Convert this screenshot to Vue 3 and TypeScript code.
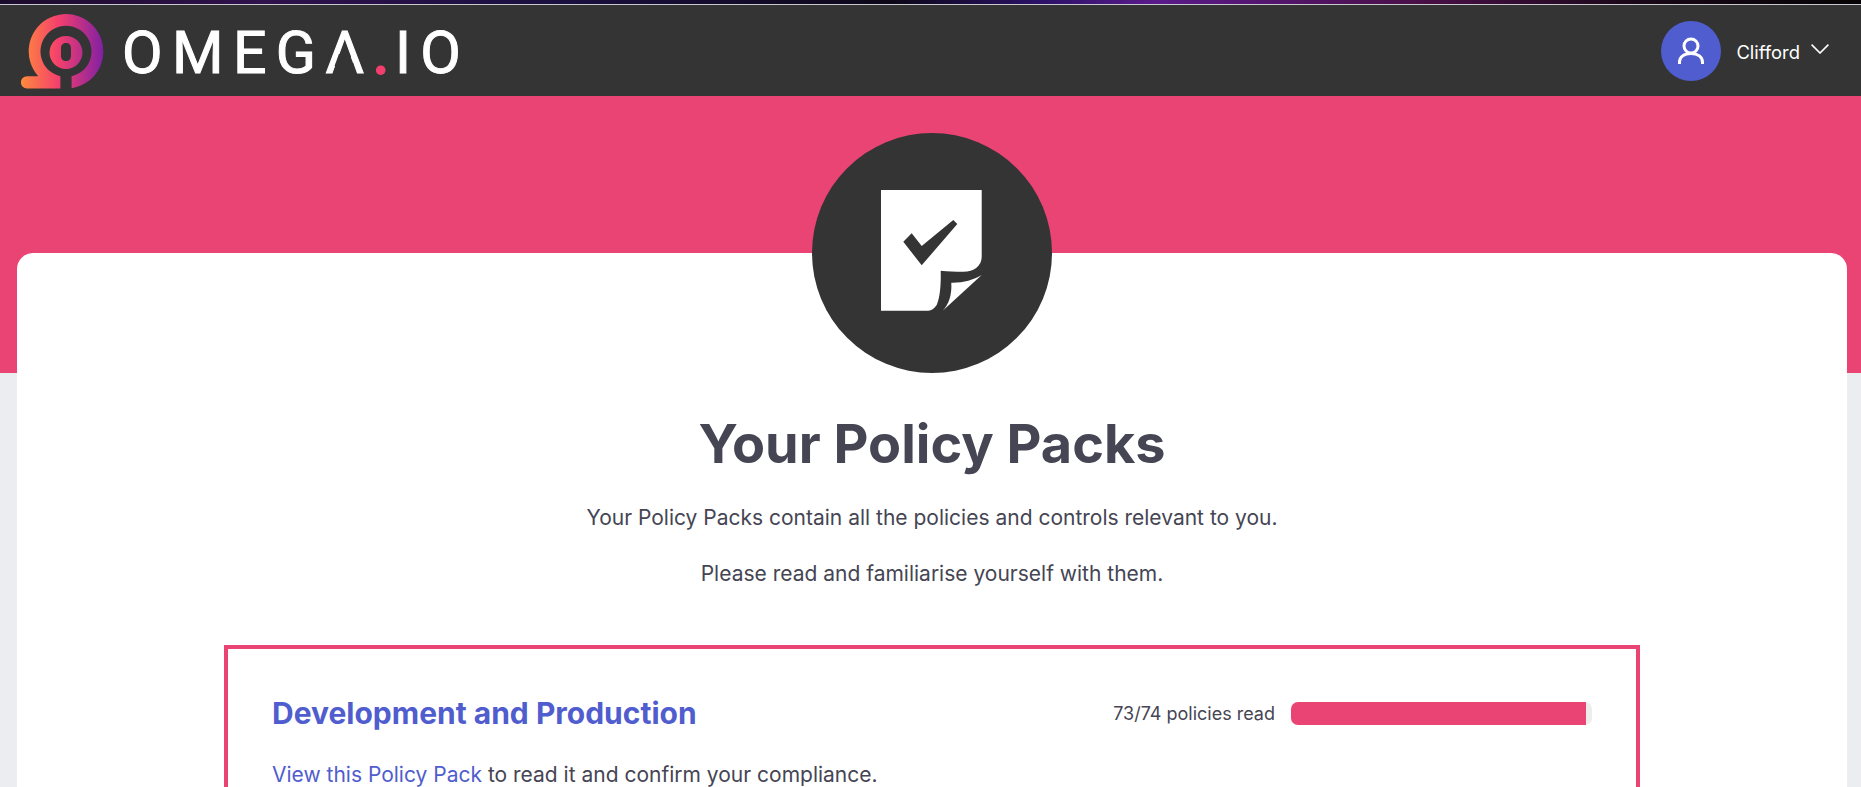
<script setup lang="ts">
const userName = 'Clifford'
const read = 73
const total = 74
const percent = Math.floor((read / total) * 100)
</script>

<template>
  <div class="page">
    <div class="topstrip"></div>
    <header class="topbar">
      <a class="brand" href="#">
        <svg class="brand-mark" viewBox="0 0 84 76" width="84" height="76" aria-hidden="true">
          <defs>
            <linearGradient id="omegaGrad" gradientUnits="userSpaceOnUse" x1="0" y1="0" x2="84" y2="0">
              <stop offset="0" stop-color="#ff8a3c" />
              <stop offset="0.45" stop-color="#f43f6e" />
              <stop offset="1" stop-color="#7d1fa5" />
            </linearGradient>
          </defs>
          <!-- ring and foot -->
          <path fill="url(#omegaGrad)"
            d="M6 62.300H17.300A37.300 37.300 0 1 1 50.600 74.200L50.600 62.200A25.500 25.500 0 1 0 39.400 62.200V74.600H6A6.150 6.150 0 0 1 6 62.300Z" />
          <!-- ball with slot -->
          <path fill="url(#omegaGrad)" fill-rule="evenodd"
            d="M45 22A16.500 16.500 0 1 0 45 55A16.500 16.500 0 1 0 45 22ZM45 29C48 29 50 31 50 34V42C50 45 48 47 45 47C42 47 40 45 40 42V34C40 31 42 29 45 29Z" />
        </svg>
        <span class="wordmark">OMEG<span class="letter-a">A</span><span class="dot">.</span>IO</span>
      </a>
      <div class="user">
        <span class="avatar">
          <svg viewBox="0 0 26 28" width="26" height="28" fill="none" stroke="#fff" stroke-width="3">
            <circle cx="13" cy="9" r="7" />
            <path d="M1.500 27V25C1.500 20 6 16.500 13 16.500C20 16.500 24.500 20 24.500 25V27" />
          </svg>
        </span>
        <span class="user-name">{{ userName }}</span>
        <svg class="chevron" viewBox="0 0 18 10" width="18" height="10" fill="none" stroke="#fff" stroke-width="1.600">
          <path d="M0.600 0.600L9 9L17.400 0.600" />
        </svg>
      </div>
    </header>

    <div class="hero"></div>

    <main class="card">
      <div class="badge">
        <svg viewBox="0 0 101 121" width="101" height="121">
          <path fill="#fff" d="M0 0H100.700V66.700C100.700 76 93 81.700 82.300 81.700C74 81.700 67 81.500 59.700 80.700C60 92 59.500 106 55.700 115C53 119 50.500 120.700 47.300 120.700H0Z" />
          <path fill="#343434" d="M22.300 51.700L30.700 43.300L40.700 56L72.300 30L76.300 34L40.700 75.300Z" />
          <path fill="#fff" d="M100.700 85C92 90 82 93 70.300 92.700C71 105 68 114 61.700 120.700Z" />
        </svg>
      </div>
      <h1 class="title">Your Policy Packs</h1>
      <p class="intro">Your Policy Packs contain all the policies and controls relevant to you.</p>
      <p class="intro">Please read and familiarise yourself with them.</p>

      <section class="pack">
        <div class="pack-head">
          <h2 class="pack-title">Development and Production</h2>
          <div class="progress">
            <span class="progress-label">{{ read }}/{{ total }} policies read</span>
            <div class="progress-track">
              <div class="progress-fill" :style="{ width: percent + '%' }"></div>
            </div>
          </div>
        </div>
        <p class="pack-text"><a href="#">View this Policy Pack</a> to read it and confirm your compliance.</p>
      </section>
    </main>
  </div>
</template>

<style>
html, body {
  margin: 0;
  height: 100%;
  overflow: hidden;
  background: #ecedf0;
}
</style>

<style scoped>
.page {
  height: 787px;
  overflow: hidden;
  position: relative;
  font-family: Inter, "Liberation Sans", sans-serif;
  color: #454553;
}
.topstrip {
  height: 4px;
  background: linear-gradient(90deg, #1c0c2c 0%, #30124c 14%, #1a1040 30%, #0c0818 48%, #2c1268 56%, #5a1a8a 62%, #4a1048 76%, #1a0818 88%, #060406 100%);
  border-bottom: 1px solid #c9c9cf;
}
.topbar {
  height: 91px;
  background: #343434;
  display: flex;
  align-items: center;
  justify-content: space-between;
  padding: 0 32px 0 21px;
}
.brand {
  display: flex;
  align-items: center;
  gap: 17px;
  text-decoration: none;
}
.brand-mark {
  display: block;
  margin-top: 2px;
}
.wordmark {
  font-family: Roboto, sans-serif;
  font-size: 59px;
  font-weight: 400;
  letter-spacing: 9.400px;
  color: #fff;
  line-height: 1;
  margin-top: 4px;
  -webkit-text-stroke: 1px #fff;
}
.letter-a {
  position: relative;
}
/* the logo's A has no crossbar */
.letter-a::after {
  content: "";
  position: absolute;
  left: 9px;
  width: 20px;
  top: 36px;
  height: 12px;
  background: #343434;
  clip-path: polygon(4.460px 0, 15.250px 0, 19.600px 12px, 0.120px 12px);
}
.dot {
  color: #f43f6e;
  letter-spacing: 6px;
  -webkit-text-stroke: 3px #f43f6e;
}
.user {
  display: flex;
  align-items: center;
  color: #fff;
}
.avatar {
  width: 60px;
  height: 60px;
  border-radius: 50%;
  background: #505dce;
  display: flex;
  align-items: center;
  justify-content: center;
}
.user-name {
  font-size: 18.400px;
  margin-left: 15px;
  margin-top: 3px;
}
.chevron {
  margin-left: 11px;
  margin-top: -4px;
}
.hero {
  height: 277px;
  background: #ea4475;
}
.card {
  position: relative;
  margin: -120px 14px 0 17px;
  background: #fff;
  border-radius: 16px 16px 0 0;
  min-height: 600px;
  display: flex;
  flex-direction: column;
  align-items: center;
}
.badge {
  width: 240px;
  height: 240px;
  border-radius: 50%;
  background: #343434;
  margin-top: -120px;
  padding: 0 1px 6px 0;
  box-sizing: border-box;
  display: flex;
  align-items: center;
  justify-content: center;
}
.badge svg {
  display: block;
}
.title {
  margin: 35px 0 0;
  font-size: 54px;
  font-weight: 700;
  line-height: 72px;
}
.intro {
  margin: 26px 0 0;
  font-size: 21px;
  line-height: 30px;
}
.title + .intro {
  margin-top: 23px;
}
.pack {
  box-sizing: border-box;
  width: 1416px;
  margin-top: 56px;
  border: 4px solid #ea4475;
  padding: 46px 44px;
}
.pack-head {
  display: flex;
  align-items: center;
  justify-content: space-between;
}
.pack-title {
  margin: 0;
  font-size: 30px;
  font-weight: 700;
  color: #505dce;
}
.progress {
  display: flex;
  align-items: center;
  gap: 16px;
}
.progress-label {
  font-size: 18px;
}
.progress-track {
  width: 301px;
  height: 23px;
  background: #ededed;
  border-radius: 7px;
  overflow: hidden;
}
.progress-fill {
  height: 100%;
  background: #ea4475;
}
.pack-text {
  margin: 29px 0 0;
  font-size: 21px;
  line-height: 30px;
}
.pack-text a {
  color: #505dce;
  text-decoration: none;
}
</style>
